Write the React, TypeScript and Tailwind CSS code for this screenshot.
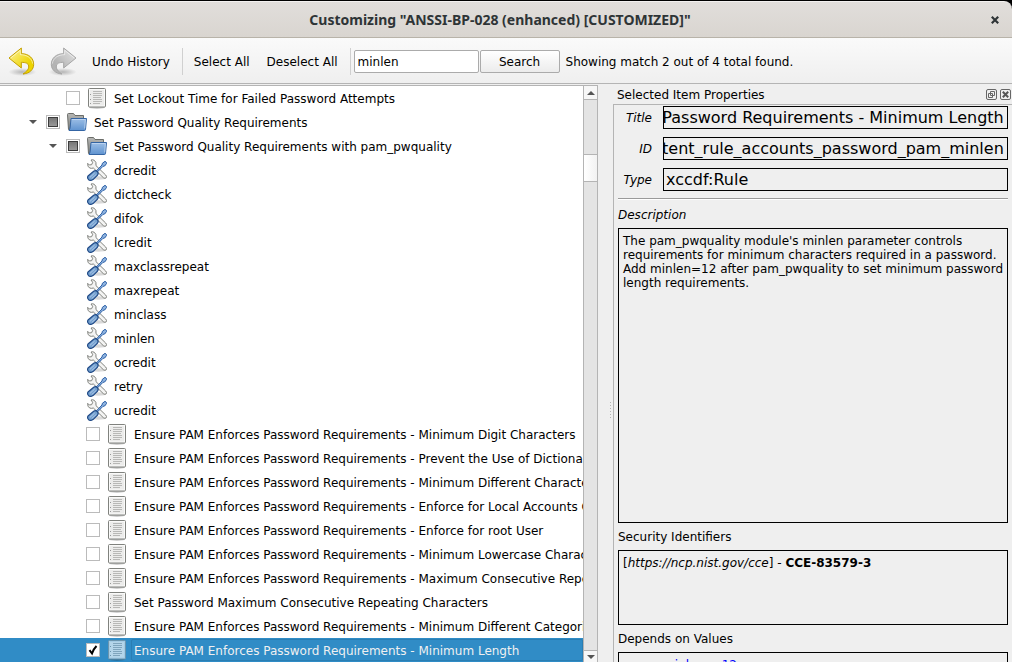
import { useEffect, useRef } from "react";

type Kind = "rule" | "group" | "value";
type Item = { id: number; level: number; kind: Kind; label: string; check?: "off" | "on" | "partial" };

const values = ["dcredit", "dictcheck", "difok", "lcredit", "maxclassrepeat", "maxrepeat", "minclass", "minlen", "ocredit", "retry", "ucredit"];
const prefix = "Ensure PAM Enforces Password Requirements - ";
const rules = [
  prefix + "Minimum Digit Characters",
  prefix + "Prevent the Use of Dictionary Words",
  prefix + "Minimum Different Characters",
  prefix + "Enforce for Local Accounts Only",
  prefix + "Enforce for root User",
  prefix + "Minimum Lowercase Characters",
  prefix + "Maximum Consecutive Repeating Characters from Same Character Class",
  "Set Password Maximum Consecutive Repeating Characters",
  prefix + "Minimum Different Categories",
];

const rows: Omit<Item, "id">[] = [
  { level: 1, kind: "rule", label: "Set Lockout Time for Failed Password Attempts", check: "off" },
  { level: 0, kind: "group", label: "Set Password Quality Requirements", check: "partial" },
  { level: 1, kind: "group", label: "Set Password Quality Requirements with pam_pwquality", check: "partial" },
  ...values.map((label) => ({ level: 2, kind: "value" as Kind, label })),
  ...rules.map((label) => ({ level: 2, kind: "rule" as Kind, label, check: "off" as const })),
  { level: 2, kind: "rule", label: prefix + "Minimum Length", check: "on" },
];
const items: Item[] = rows.map((r, id) => ({ ...r, id }));

const indents = ["pl-[26px]", "pl-[46px]", "pl-[66px]"];

function ArrowIcon({ redo = false }: { redo?: boolean }) {
  const id = redo ? "redo" : "undo";
  const light = redo ? "#e6e6e6" : "#fdf3a0";
  const dark = redo ? "#b4b4b4" : "#edd400";
  const edge = redo ? "#a6a6a6" : "#c4a000";
  return (
    <svg width="30" height="30" viewBox="22 138 90 90" aria-hidden="true">
      <defs>
        <linearGradient id={id} x1="0" y1="0" x2="0.7" y2="0.7">
          <stop offset="0" stopColor={light} />
          <stop offset="1" stopColor={dark} />
        </linearGradient>
        <radialGradient id={id + "s"}>
          <stop offset="0" stopColor="#000" stopOpacity="0.25" />
          <stop offset="1" stopColor="#000" stopOpacity="0" />
        </radialGradient>
      </defs>
      <g transform={redo ? "translate(134 0) scale(-1 1)" : undefined}>
        <ellipse cx="68" cy="213" rx="42" ry="12" fill={`url(#${id}s)`} />
        <path d="M28 171 L65 141 V158 C88 158 102 172 102 190 C102 206 90 217 70 219 C82 211 88 204 87 195 C86 187 78 184 65 184 V201 Z" fill={`url(#${id})`} stroke={edge} strokeWidth="3" strokeLinejoin="round" />
        <path d="M33 171 L62 148 V161 C82 161 97 172 99 188" fill="none" stroke="#fff" strokeOpacity="0.65" strokeWidth="2.5" />
      </g>
    </svg>
  );
}

function DocumentIcon({ selected }: { selected: boolean }) {
  return (
    <svg width="20" height="22" viewBox="0 0 20 22" aria-hidden="true">
      <ellipse cx="10" cy="20.5" rx="8" ry="1.2" fill="#000" opacity="0.25" />
      <rect x="1.5" y="1.5" width="17" height="18.5" rx="1" fill={selected ? "#a3cbe4" : "#fafaf9"} stroke={selected ? "#6b95ae" : "#80827e"} />
      <rect x="3" y="3" width="14" height="15.5" fill={selected ? "#b4d5e9" : "#ececeb"} />
      <path d="M6 4.5h9M6 6.5h9M6 8.5h9M6 10.5h8M6 12.5h9M6 14.5h9M6 16.5h7" stroke={selected ? "#7fa5bd" : "#b8b8b6"} fill="none" />
      <path d="M3 7.5h1M3 12.5h1M3 16.5h1" stroke={selected ? "#6b95ae" : "#999"} />
    </svg>
  );
}

function FolderIcon() {
  return (
    <svg width="20" height="20" viewBox="0 0 20 20" aria-hidden="true">
      <defs>
        <linearGradient id="folder" x1="0" y1="0" x2="0" y2="1">
          <stop offset="0" stopColor="#9dbfe6" />
          <stop offset="1" stopColor="#5f93d0" />
        </linearGradient>
        <linearGradient id="folderback" x1="0" y1="0" x2="0" y2="1">
          <stop offset="0" stopColor="#b8b8b6" />
          <stop offset="1" stopColor="#7c7e7a" />
        </linearGradient>
      </defs>
      <path d="M1.5 17.5 L0.5 2.5 Q0.5 1.5 1.5 1.5 H6.5 L8 3.5 H16.5 V8 L4 17.5Z" fill="url(#folderback)" stroke="#6b6d69" />
      <path d="M4 6.5 H19.5 L18.5 17.5 Q18.4 18.5 17.5 18.5 H2 Q3 17 3.2 15Z" fill="url(#folder)" stroke="#3465a4" strokeLinejoin="round" />
      <path d="M4.8 7.5 H18.4 L17.7 16.5" fill="none" stroke="#c6daf1" strokeOpacity="0.8" />
    </svg>
  );
}

function ToolsIcon() {
  return (
    <svg width="20" height="22" viewBox="0 0 60 66" aria-hidden="true">
      <ellipse cx="34" cy="57" rx="24" ry="5" fill="#000" opacity="0.15" />
      <path d="M12 3 L17 10 L14 17 L7 18 L2 13 Q1 23 8 27 Q13 29 19 27 L49 56 Q54 60 58 56 Q60 52 56 48 L27 20 Q29 9 22 4 Q17 1 12 3Z" fill="#f4f4f3" stroke="#80827d" strokeWidth="3" strokeLinejoin="round" />
      <path d="M58 10 L54 7 L46 13 L45 18 L28 36 L31 39 L48 22 L53 21 L59 13Z" fill="#8fb4e0" stroke="#2a5ea5" strokeWidth="3" strokeLinejoin="round" />
      <path d="M20 37 Q26 33 31 38 Q36 44 31 49 L19 61 Q11 67 5 62 Q-1 56 4 50Z" fill="#729fcf" stroke="#204a87" strokeWidth="3.6" />
      <path d="M23 42 L9 55 M28 46 L14 59" stroke="#c9dcf1" strokeWidth="2.2" />
    </svg>
  );
}

function TreeCheckbox({ item }: { item: Item }) {
  return (
    <span className="mr-[7px] grid size-[14px] shrink-0 place-items-center">
      <input
        id={`item-${item.id}`}
        type="checkbox"
        defaultChecked={item.check === "on"}
        ref={(el) => {
          if (el) el.indeterminate = item.check === "partial";
        }}
        className="peer col-start-1 row-start-1 size-[14px] appearance-none border border-[#bbbbbb] bg-white"
      />
      <svg className="pointer-events-none col-start-1 row-start-1 hidden peer-checked:block" width="14" height="14" viewBox="0 0 14 14" aria-hidden="true">
        <path d="M3.5 7.2 L6 10.5 Q7.5 6 10.5 3" fill="none" stroke="#000" strokeWidth="2" />
      </svg>
      <span className="pointer-events-none col-start-1 row-start-1 hidden size-[10px] border border-[#3c3c3c] bg-linear-to-b from-[#777777] to-[#999999] peer-indeterminate:block" />
    </span>
  );
}

function TreeRow({ item }: { item: Item }) {
  const selected = item.check === "on";
  return (
    <li className={`flex h-6 items-center ${indents[item.level]} ${selected ? "bg-[#308cc6]" : ""}`}>
      <span className="flex w-5 shrink-0 items-center">
        {item.kind === "group" && (
          <button type="button" aria-label={`Collapse ${item.label}`} className="p-[3px]">
            <svg width="8" height="4" viewBox="0 0 8 4" aria-hidden="true">
              <path d="M0 0H8L4 4Z" fill="#555" />
            </svg>
          </button>
        )}
      </span>
      {item.check && <TreeCheckbox item={item} />}
      <span className={`mr-[7px] flex w-5 shrink-0 justify-center ${item.check ? "" : "ml-px"}`}>
        {item.kind === "rule" && <DocumentIcon selected={selected} />}
        {item.kind === "group" && <FolderIcon />}
        {item.kind === "value" && <ToolsIcon />}
      </span>
      {item.check ? (
        <label htmlFor={`item-${item.id}`} className={selected ? "-ml-[3px] flex h-[22px] flex-1 items-center rounded-xs border border-[#2a7eb3] pt-[2px] pl-[2px] text-[#eff0f1]" : "pt-[2px]"}>
          {item.label}
        </label>
      ) : (
        <span className="pt-[2px]">{item.label}</span>
      )}
    </li>
  );
}

function PropertyField({ id, label, value }: { id: string; label: string; value: string }) {
  const ref = useRef<HTMLInputElement>(null);
  useEffect(() => {
    if (ref.current) ref.current.scrollLeft = ref.current.scrollWidth;
  }, []);
  return (
    <div className="flex items-center">
      <label htmlFor={id} className="w-[38px] pr-[4px] text-right italic">{label}</label>
      <input
        id={id}
        ref={ref}
        readOnly
        defaultValue={value}
        className={`ml-[7px] h-[23px] min-w-0 flex-1 border border-black bg-transparent pr-[3px] text-base leading-5 outline-none ${id === "type" ? "pl-[2px]" : "pl-0"}`}
      />
    </div>
  );
}

const panelButton = "grid size-[11px] place-items-center rounded-xs border border-[#666666]";

export default function App() {
  return (
    <div className="flex h-screen flex-col overflow-hidden bg-[#efefef] font-['DejaVu_Sans',sans-serif] text-[12px] leading-[14px] whitespace-nowrap text-black">
      <div className="bg-black pt-px">
        <header className="flex h-[37px] items-center rounded-tr-lg border-t border-b border-t-[#f3f1f0] border-b-[#b8b3a9] bg-linear-to-b from-[#e1dedb] to-[#d9d5d0] pr-[12px] pl-[10px]">
          <h1 className="flex-1 text-center font-['Noto_Sans',sans-serif] text-[14px] leading-5 font-bold text-[#2e3436]">
            Customizing "ANSSI-BP-028 (enhanced) [CUSTOMIZED]"
          </h1>
          <button type="button" aria-label="Close window" className="p-px">
            <svg width="8" height="8" viewBox="0 0 8 8" aria-hidden="true">
              <path d="M0.8 0.8 L7.2 7.2 M7.2 0.8 L0.8 7.2" stroke="#2e3436" strokeWidth="2.2" />
            </svg>
          </button>
        </header>
      </div>

      <div role="toolbar" aria-label="Main" className="flex h-[46px] shrink-0 items-center border-b border-[#b4b4b4] bg-linear-to-b from-[#fafafa] to-[#efefef] pt-[2px] pl-[7px]">
        <button type="button" aria-label="Undo"><ArrowIcon /></button>
        <button type="button" aria-label="Redo" className="ml-[11px]"><ArrowIcon redo /></button>
        <button type="button" className="ml-[14px]">Undo History</button>
        <span className="ml-[12px] h-[27px] w-px bg-[#d0d0d0]" />
        <button type="button" className="ml-[11px]">Select All</button>
        <button type="button" className="ml-[17px]">Deselect All</button>
        <span className="ml-[12px] h-[27px] w-px bg-[#d0d0d0]" />
        <input aria-label="Search text" defaultValue="minlen" className="ml-[3px] h-[23px] w-[125px] rounded-xs border border-[#ababab] bg-white px-[3px] outline-none" />
        <button type="button" className="ml-px h-[23px] w-[80px] rounded-xs border border-[#ababab] bg-linear-to-b from-white to-[#ececec]">Search</button>
        <span className="ml-[6px]">Showing match 2 out of 4 total found.</span>
      </div>

      <main className="flex min-h-0 flex-1 pt-px">
        <section aria-label="Rules" className="flex min-w-0 flex-1 border-t border-r border-[#b4b4b4] bg-white">
          <ul className="min-w-0 flex-1 overflow-hidden">
            {items.map((item) => <TreeRow key={item.id} item={item} />)}
          </ul>
          <div className="flex w-[14px] flex-col border-l border-[#b4b4b4] bg-[#e4e4e4]">
            <button type="button" aria-label="Scroll up" className="grid h-[14px] place-items-center border-b border-[#b4b4b4] bg-[#f7f7f7]">
              <svg width="8" height="4" viewBox="0 0 8 4" aria-hidden="true"><path d="M0 4H8L4 0Z" fill="#555" /></svg>
            </button>
            <div className="flex flex-1 flex-col pt-[54px]">
              <div className="h-[28px] border-y border-[#b4b4b4] bg-linear-to-r from-white to-[#f2f2f2]" />
            </div>
            <button type="button" aria-label="Scroll down" className="grid h-[12px] place-items-center border-t border-[#b4b4b4] bg-[#f7f7f7]">
              <svg width="8" height="4" viewBox="0 0 8 4" aria-hidden="true"><path d="M0 0H8L4 4Z" fill="#555" /></svg>
            </button>
          </div>
        </section>

        <div className="flex w-[15px] items-center justify-end pt-[74px] pr-[2px]" aria-hidden="true">
          <span className="h-[17px] w-px bg-[repeating-linear-gradient(#b4b4b4_0_1px,transparent_1px_3px)]" />
        </div>

        <aside className="flex w-[399px] shrink-0 flex-col">
          <div className="flex h-[19px] items-center pr-px pl-[4px]">
            <h2 className="flex-1">Selected Item Properties</h2>
            <button type="button" aria-label="Float panel" className={panelButton}>
              <svg width="7" height="7" viewBox="0 0 7 7" aria-hidden="true">
                <path d="M2.5 0.5H6.5V4.5H2.5ZM0.5 2.5H4.5V6.5H0.5Z" fill="none" stroke="#666" />
              </svg>
            </button>
            <button type="button" aria-label="Close panel" className={`ml-[3px] ${panelButton}`}>
              <svg width="7" height="7" viewBox="0 0 7 7" aria-hidden="true">
                <path d="M0.8 0.8 L6.2 6.2 M6.2 0.8 L0.8 6.2" stroke="#555" strokeWidth="2" />
              </svg>
            </button>
          </div>
          <div className="flex min-h-0 flex-1 flex-col border-t border-l border-[#b4b4b4] pt-px pr-[4px] pl-[4px]">
            <div className="flex flex-col gap-2">
              <PropertyField id="title" label="Title" value="Ensure PAM Enforces Password Requirements - Minimum Length" />
              <PropertyField id="ident" label="ID" value="xccdf_org.ssgproject.content_rule_accounts_password_pam_minlen" />
              <PropertyField id="type" label="Type" value="xccdf:Rule" />
            </div>
            <hr className="mt-[7px] h-[2px] shrink-0 border-t border-b border-t-[#9a9a9a] border-b-white" />
            <h3 className="mt-[8px] italic">Description</h3>
            <div className="mt-[6px] min-h-0 flex-1 border border-black py-[5px] pl-[4px] whitespace-normal">
              <p>The pam_pwquality module's minlen parameter controls requirements for minimum characters required in a password. Add minlen=12 after pam_pwquality to set minimum password length requirements.</p>
            </div>
            <h3 className="mt-[7px]">Security Identifiers</h3>
            <div className="mt-[6px] h-[75px] shrink-0 border border-black px-[4px] py-[5px]">
              [<a href="https://ncp.nist.gov/cce" className="italic">https://ncp.nist.gov/cce</a>] - <b>CCE-83579-3</b>
            </div>
            <h3 className="mt-[7px]">Depends on Values</h3>
            <div className="mt-[6px] h-[10px] shrink-0 overflow-hidden border border-b-0 border-black px-[4px] pt-[5px]">
              <ul className="list-disc pl-[40px]">
                <li><a href="#minlen" className="text-[#0000ff] underline">minlen = 12</a></li>
              </ul>
            </div>
          </div>
        </aside>
      </main>
    </div>
  );
}
